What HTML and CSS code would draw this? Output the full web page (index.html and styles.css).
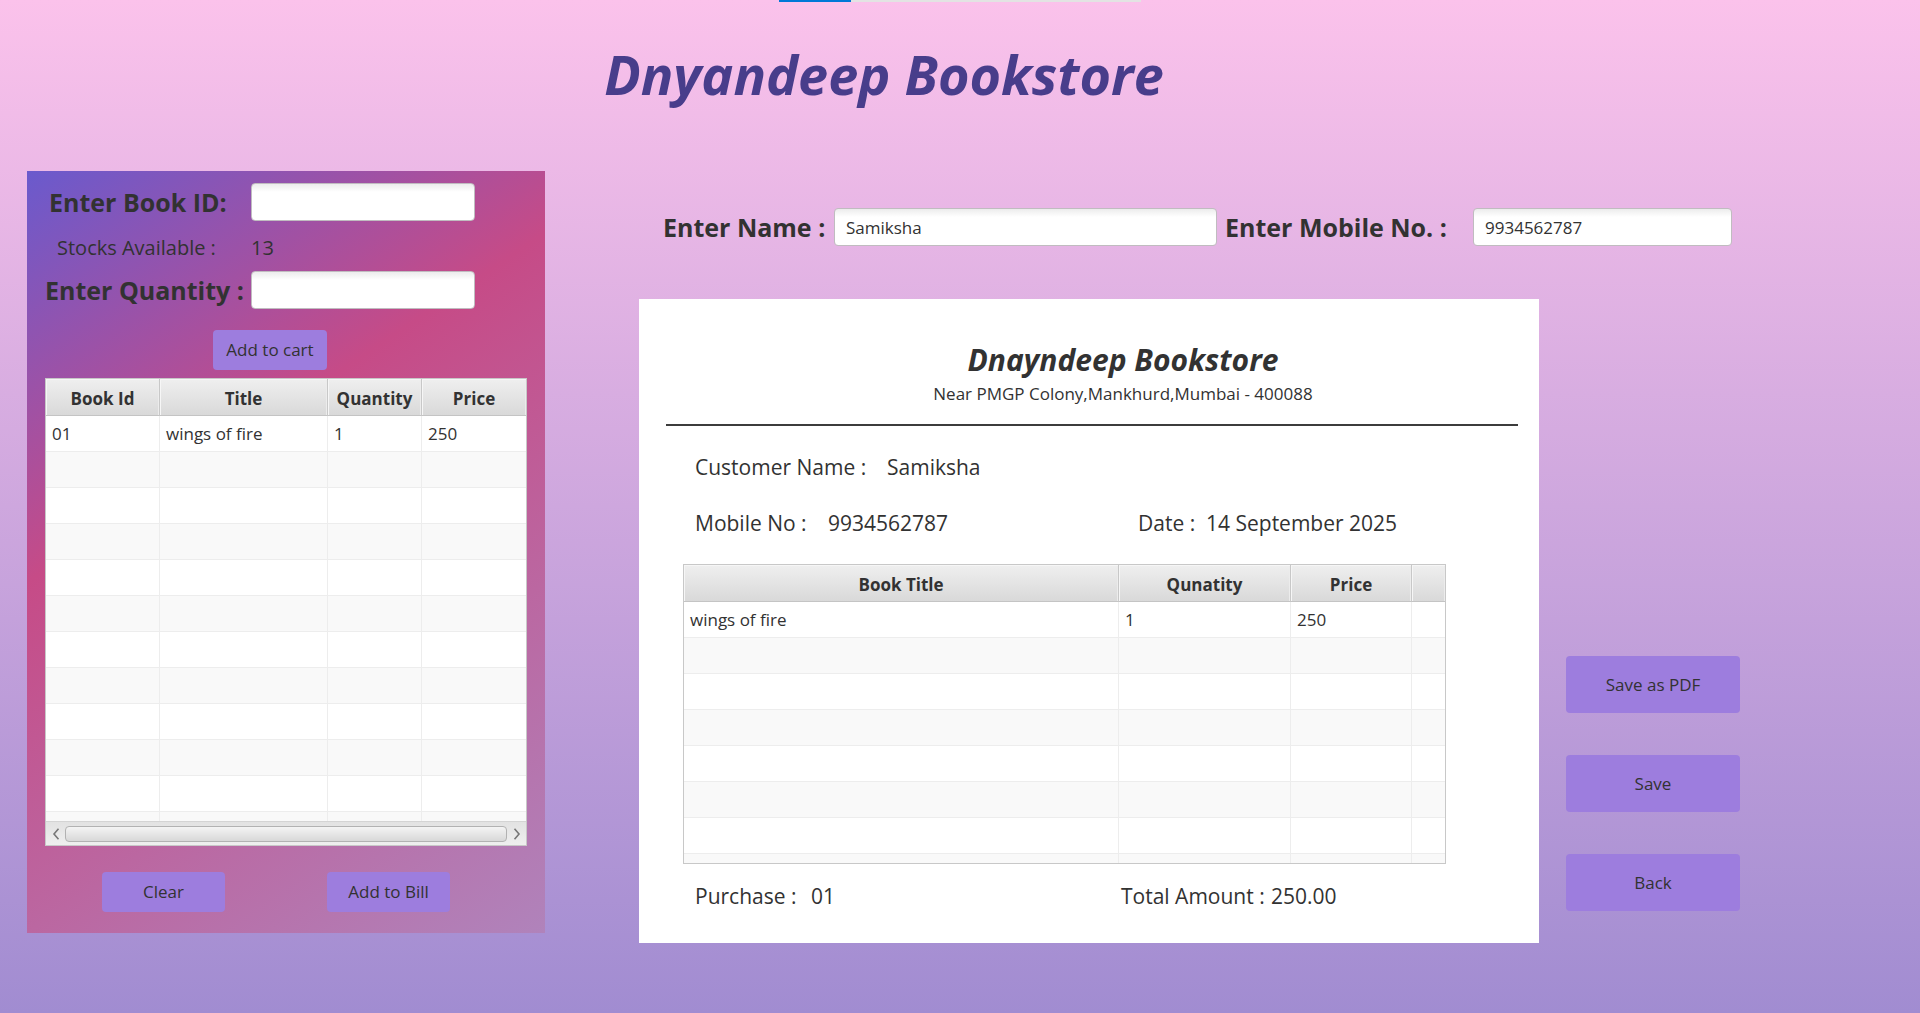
FILE: index.html
```html
<!DOCTYPE html>
<html lang="en">
<head>
<meta charset="utf-8">
<title>Dnyandeep Bookstore</title>
<link rel="stylesheet" href="styles.css">
</head>
<body>
<progress class="page-progress" value="20" max="100" aria-label="Page progress"></progress>
<header class="page-header"><h1 class="page-title">Dnyandeep Bookstore</h1></header>
<main class="layout">
  <section class="cart">
    <form class="cart-form">
      <label class="field-label id-label" for="book-id">Enter Book ID:</label>
      <input class="text-field" id="book-id" type="text">
      <span class="stock-label">Stocks Available :</span>
      <output class="stock-value">13</output>
      <label class="field-label" for="quantity">Enter Quantity :</label>
      <input class="text-field" id="quantity" type="text">
    </form>
    <button class="button add-button" type="button">Add to cart</button>
    <div class="table-box">
      <table class="grid">
        <colgroup><col class="c-id"><col class="c-title"><col class="c-qty"><col></colgroup>
        <thead><tr><th>Book Id</th><th>Title</th><th>Quantity</th><th>Price</th></tr></thead>
        <tbody>
          <tr><td>01</td><td>wings of fire</td><td>1</td><td>250</td></tr>
          <tr><td></td><td></td><td></td><td></td></tr>
          <tr><td></td><td></td><td></td><td></td></tr>
          <tr><td></td><td></td><td></td><td></td></tr>
          <tr><td></td><td></td><td></td><td></td></tr>
          <tr><td></td><td></td><td></td><td></td></tr>
          <tr><td></td><td></td><td></td><td></td></tr>
          <tr><td></td><td></td><td></td><td></td></tr>
          <tr><td></td><td></td><td></td><td></td></tr>
          <tr><td></td><td></td><td></td><td></td></tr>
          <tr><td></td><td></td><td></td><td></td></tr>
          <tr class="partial"><td></td><td></td><td></td><td></td></tr>
        </tbody>
      </table>
      <div class="scrollbar">
        <button class="scroll-arrow" type="button" aria-label="Scroll left"><svg width="8" height="12" viewBox="0 0 8 12"><path d="M6.500 .8 2 6l4.500 5.200" fill="none" stroke="#777" stroke-width="1.600"/></svg></button>
        <div class="scroll-thumb"></div>
        <button class="scroll-arrow" type="button" aria-label="Scroll right"><svg width="8" height="12" viewBox="0 0 8 12"><path d="M1.500 .8 6 6l-4.500 5.200" fill="none" stroke="#777" stroke-width="1.600"/></svg></button>
      </div>
    </div>
    <div class="cart-actions">
      <button class="button" type="button">Clear</button>
      <button class="button" type="button">Add to Bill</button>
    </div>
  </section>

  <div class="billing">
    <form class="customer-form">
      <label class="field-label" for="name">Enter Name :</label>
      <input class="text-field" id="name" type="text" value="Samiksha">
      <label class="field-label mobile-label" for="mobile">Enter Mobile No. :</label>
      <input class="text-field" id="mobile" type="text" value="9934562787">
    </form>
    <section class="receipt">
      <header class="receipt-header">
        <h2 class="receipt-title">Dnayndeep Bookstore</h2>
        <p class="receipt-address">Near PMGP Colony,Mankhurd,Mumbai - 400088</p>
      </header>
      <hr class="rule">
      <div class="details">
        <div class="pair"><span class="key-customer">Customer Name :</span><span>Samiksha</span></div>
        <div class="pair details-second"><span class="key-mobile">Mobile No :</span><span>9934562787</span></div>
        <div class="pair details-second"><span class="key-date">Date :</span><span>14 September 2025</span></div>
      </div>
      <div class="table-box bill-table">
        <table class="grid">
          <colgroup><col><col class="b-qty"><col class="b-price"><col class="b-rest"></colgroup>
          <thead><tr><th>Book Title</th><th>Qunatity</th><th>Price</th><th></th></tr></thead>
          <tbody>
            <tr><td>wings of fire</td><td>1</td><td>250</td><td></td></tr>
            <tr><td></td><td></td><td></td><td></td></tr>
            <tr><td></td><td></td><td></td><td></td></tr>
            <tr><td></td><td></td><td></td><td></td></tr>
            <tr><td></td><td></td><td></td><td></td></tr>
            <tr><td></td><td></td><td></td><td></td></tr>
            <tr><td></td><td></td><td></td><td></td></tr>
            <tr class="partial"><td></td><td></td><td></td><td></td></tr>
          </tbody>
        </table>
      </div>
      <footer class="totals">
        <div class="pair"><span class="key-purchase">Purchase :</span><span>01</span></div>
        <div class="pair"><span class="key-total">Total Amount :</span><span>250.00</span></div>
      </footer>
    </section>
    <nav class="actions">
      <button class="button action" type="button">Save as PDF</button>
      <button class="button action" type="button">Save</button>
      <button class="button action" type="button">Back</button>
    </nav>
  </div>
</main>
</body>
</html>
```
FILE: styles.css
```css
* { box-sizing: border-box; }

body {
  margin: 0;
  min-height: 100vh;
  background: linear-gradient(#fbc2eb, #a18cd1);
  color: #323232;
  font: 17px/24px "Open Sans", "Noto Sans", sans-serif;
}

h1, h2, p { margin: 0; }

/* Progress strip at the top edge */
.page-progress {
  display: block;
  appearance: none;
  width: 362px;
  height: 2px;
  margin: 0 auto;
  border: 0;
}
.page-progress::-webkit-progress-bar { background: #e3e3e3; }
.page-progress::-webkit-progress-value { background: #0078d7; }

.page-header {
  padding: 34px 152px 59px 0;
  text-align: center;
}
.page-title {
  color: #483d8b;
  font-size: 54px;
  font-style: italic;
  line-height: 76px;
}

.layout {
  display: grid;
  grid-template-columns: 518fr 1101fr;
  column-gap: 94px;
  align-items: start;
  padding: 0 180px 0 27px;
}

/* Shared controls */
.field-label {
  font-size: 25px;
  font-weight: 700;
  line-height: 36px;
  white-space: nowrap;
}
.text-field {
  min-width: 0;
  height: 38px;
  padding: 0 11px;
  border: 1px solid #c0bcc0;
  border-radius: 4px;
  background: linear-gradient(#ececec, #fff 8px);
  color: #323232;
  font: inherit;
}
.button {
  height: 40px;
  padding: 0;
  border: 0;
  border-radius: 4px;
  background: #9d7dde;
  color: #323232;
  font: inherit;
}

/* Cart */
.cart {
  display: flex;
  flex-direction: column;
  padding: 12px 18px 21px;
  background: linear-gradient(146deg, #6a5acd, #c64b87 37%, #b083bb);
}
.cart-form {
  display: grid;
  grid-template-columns: 206px 224px;
  grid-template-rows: 38px 50px 38px;
  align-items: center;
}
.id-label { padding-left: 4px; }
.stock-label { padding-left: 12px; }
.stock-label, .stock-value {
  padding-top: 4px;
  font-size: 20px;
  line-height: 28px;
}
.add-button {
  align-self: center;
  width: 114px;
  margin: 21px 32px 8px 0;
}

/* Tables */
.table-box {
  border: 1px solid #c8c8c8;
  background: #fff;
}
.grid {
  width: 100%;
  border-collapse: separate;
  border-spacing: 0;
  table-layout: fixed;
}
.grid th {
  height: 37px;
  padding: 4px 0 0;
  border-right: 1px solid #c8c8c8;
  border-bottom: 1px solid #c4c4c4;
  background: linear-gradient(#efefef, #d9d9d9);
  box-shadow: inset 1px 1px 0 #f6f6f6, inset -1px 0 0 #ececec;
}
.grid td {
  height: 36px;
  padding: 0 6px;
  border-right: 1px solid #ededed;
  border-bottom: 1px solid #ededed;
}
.grid th:last-child, .grid td:last-child { border-right: 0; }
.grid tbody tr:nth-child(even) { background: #f9f9f9; }
.grid .partial td { height: 9px; border-bottom: 0; }
.c-id { width: 114px; }
.c-title { width: 168px; }
.c-qty { width: 94px; }
.b-qty { width: 172px; }
.b-price { width: 121px; }
.b-rest { width: 33px; }

.scrollbar {
  display: flex;
  align-items: center;
  height: 24px;
  border-top: 1px solid #d4d4d4;
  background: linear-gradient(#e2e2e2, #efefef);
}
.scroll-arrow {
  display: flex;
  justify-content: center;
  align-items: center;
  width: 19px;
  height: 22px;
  padding: 0;
  border: 0;
  background: none;
}
.scroll-thumb {
  flex: 1;
  height: 16px;
  border: 1px solid #b2b2b2;
  border-radius: 4px;
  background: linear-gradient(#f4f4f4, #d8d8d8);
}

.cart-actions {
  display: grid;
  grid-template-columns: 123px 123px;
  justify-content: center;
  column-gap: 102px;
  margin: 26px 20px 0 0;
}

/* Billing */
.billing {
  display: grid;
  grid-template-columns: 900fr 174fr;
  column-gap: 27px;
  padding-top: 37px;
}
.customer-form {
  display: grid;
  grid-column: 1 / -1;
  grid-template-columns: 171px 383fr 256px 259fr;
  align-items: center;
  margin: 0 8px 53px 24px;
}
.mobile-label { padding-left: 8px; }

.receipt {
  padding: 41px 21px 32px 27px;
  background: #fff;
}
.receipt-header { padding-left: 62px; text-align: center; }
.receipt-title {
  font-size: 30px;
  font-style: italic;
  line-height: 40px;
}
.receipt-address { line-height: 28px; }
.rule {
  height: 2px;
  margin: 16px 0 0;
  border: 0;
  background: #3c3c3c;
}
.details, .totals {
  display: grid;
  grid-template-columns: 443fr 380fr;
  padding-left: 29px;
  font-size: 21px;
  line-height: 30px;
}
.details { padding-top: 26px; row-gap: 26px; }
.details-second { grid-row: 2; }
.pair { display: flex; white-space: nowrap; }
.key-customer { width: 192px; }
.key-mobile { width: 133px; }
.key-date { width: 68px; }
.key-purchase { width: 116px; }
.key-total { width: 150px; }
.bill-table { margin: 26px 72px 17px 17px; }
.totals { grid-template-columns: 426fr 397fr; }

.actions {
  display: flex;
  flex-direction: column;
  justify-content: flex-end;
  gap: 42px;
  padding-bottom: 32px;
}
.action { height: 57px; }
```
